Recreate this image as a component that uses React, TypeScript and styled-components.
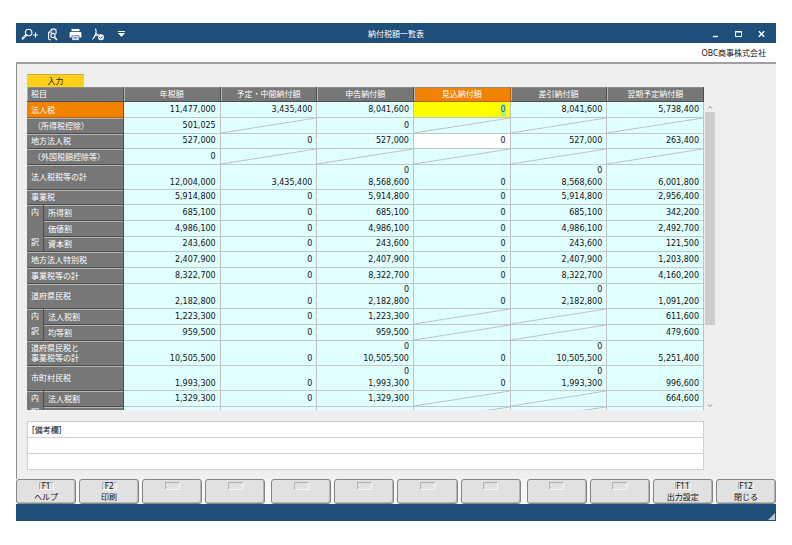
import React, { useEffect, useRef } from 'react';
import styled, { createGlobalStyle, css } from 'styled-components';

const GlobalStyle = createGlobalStyle`
  *, *::before, *::after { box-sizing: border-box; }
  body {
    margin: 0;
    background: #fff;
    color: #111;
    font: 8px/10px "Noto Sans", "Noto Sans CJK JP", sans-serif;
  }
  button, input { font: inherit; color: inherit; margin: 0; padding: 0; border: 0; }
`;

const Page = styled.main`
  height: 100vh;
  min-height: 320px;
  padding: 23px 16px 24px;
`;

const AppWindow = styled.section`
  display: flex;
  flex-direction: column;
  height: 100%;
`;

const TitleBar = styled.header`
  display: grid;
  grid-template-columns: 1fr auto 1fr;
  align-items: center;
  height: 20px;
  padding: 2px 5px 0;
  background: #1f4e79;
  color: #fff;
`;

const Title = styled.h1`
  margin: 0;
  font-size: 8px;
  font-weight: 400;
`;

const Tools = styled.div`
  display: flex;
  align-items: center;
  gap: 6px;
`;

const WindowControls = styled(Tools)`
  justify-content: flex-end;
  gap: 12px;
  padding-right: 4px;
`;

const IconButton = styled.button`
  display: grid;
  place-items: center;
  width: 17px;
  height: 16px;
  background: none;
  color: #fff;
`;

const ControlButton = styled(IconButton)`
  width: 11px;
`;

const CompanyBar = styled.div`
  display: flex;
  align-items: center;
  justify-content: flex-end;
  height: 19px;
  padding-right: 10px;
`;

const Panel = styled.div`
  display: flex;
  flex: 1;
  flex-direction: column;
  min-height: 0;
  padding: 10px 0 9px 10px;
  background: #efefef;
  border-top: 2px solid #a0a0a0;
  border-left: 1px solid #8c8c8c;
`;

const Tab = styled.button`
  width: 57px;
  height: 13px;
  background: #ffd017;
  border-top: 1px solid #c8a84a;
  color: #222;
  text-align: center;
`;

const TableArea = styled.div`
  display: grid;
  grid-template-columns: minmax(0, 1fr) 72px;
  flex: 1;
  min-height: 0;
`;

const Viewport = styled.div`
  min-height: 0;
  overflow: hidden;
`;

const Table = styled.table`
  width: 100%;
  table-layout: fixed;
  border-collapse: separate;
  border-spacing: 0;
`;

const GroupCol = styled.col`
  width: 17px;
`;

const NameCol = styled.col`
  width: 80px;
`;

const bevel = css`
  background: #777;
  color: #fff;
  border-right: 1px solid #4e4e4e;
  border-bottom: 1px solid #4e4e4e;
  box-shadow: inset 0 1px #b4b4b4;
`;

const HeadCell = styled.th<{ $active?: boolean; $start?: boolean }>`
  ${bevel}
  position: sticky;
  top: 0;
  height: 15px;
  padding: 0 4px;
  font-weight: 400;
  text-align: ${(p) => (p.$start ? 'left' : 'center')};
  box-shadow: inset 1px 0 #b4b4b4, inset 0 1px #8c8c8c;
  ${(p) => p.$active && css`background: #f08200; border-color: #b96400;`}
`;

const Row = styled.tr<{ $tall?: boolean }>`
  height: ${(p) => (p.$tall ? 25 : 16)}px;
  ${(p) => !p.$tall && css`&:nth-child(3n) { height: 15px; }`}
`;

const NameCell = styled.th<{ $active?: boolean; $indent?: boolean }>`
  ${bevel}
  padding: 0 4px 0 ${(p) => (p.$indent ? 6 : 4)}px;
  font-weight: 400;
  text-align: left;
  white-space: nowrap;
  ${(p) => p.$active && css`background: #f08200; border-bottom-color: #b96400; box-shadow: none;`}
`;

const GroupCell = styled(NameCell)`
  height: 1px;
  padding: 2px 4px 4px;
`;

const GroupLabel = styled.span`
  display: flex;
  flex-direction: column;
  justify-content: space-between;
  height: 100%;
`;

const ValueCell = styled.td<{ $slash?: boolean; $tall?: boolean; $tone?: 'focus' | 'entry' }>`
  padding: 0 4px 0 2px;
  background: ${(p) => (p.$tone === 'focus' ? '#ffff00' : p.$tone === 'entry' ? '#fff' : '#e0ffff')};
  border-right: 1px solid #c2c2c2;
  border-bottom: 1px solid #c2c8c8;
  font-family: "DejaVu Sans", sans-serif;
  line-height: 12px;
  text-align: right;
  vertical-align: ${(p) => (p.$tall ? 'bottom' : 'middle')};
  ${(p) => p.$slash && css`
    background-image: linear-gradient(to bottom right, transparent calc(50% - 1px), #bcc4c4 50%, transparent calc(50% + 1px));
  `}
`;

const Line = styled.div``;

const AmountInput = styled.input`
  display: block;
  width: 100%;
  height: 12px;
  background: none;
  outline: none;
  text-align: right;
  &::selection { background: #a0f096; color: #0a6478; }
`;

const ScrollBar = styled.div`
  display: flex;
  flex-direction: column;
  width: 11px;
  min-height: 0;
  padding: 15px 0 0 1px;
`;

const ScrollButton = styled.button`
  display: grid;
  place-items: center;
  flex: none;
  height: 10px;
  background: none;
  color: #777;
`;

const Track = styled.div`
  flex: 1;
  min-height: 0;
`;

const Thumb = styled.div`
  height: 74%;
  background: #cdcdcd;
`;

const Notes = styled.div`
  margin: 11px 72px 0 0;
  background: #fff;
  border: 1px solid #cfcfcf;
  border-bottom: 0;
`;

const NoteLine = styled.div`
  display: flex;
  align-items: center;
  gap: 4px;
  height: 16px;
  padding: 0 4px;
  border-bottom: 1px solid #cfcfcf;
`;

const NoteInput = styled.input`
  flex: 1;
  min-width: 0;
  background: none;
  outline: none;
`;

const KeyBar = styled.nav`
  display: grid;
  grid-template-columns: repeat(3, minmax(0, 1fr));
  gap: 6px;
  background: #f6f6f6;
`;

const KeyGroup = styled.div`
  display: grid;
  grid-template-columns: repeat(4, minmax(0, 1fr));
  gap: 3px;
`;

const KeyButton = styled.button`
  display: flex;
  flex-direction: column;
  align-items: center;
  gap: 1px;
  height: 25px;
  padding-top: 2px;
  background: #e1e1e1;
  border: 1px solid #858585;
  border-radius: 3px;
  box-shadow: inset -1px -1px #b4b4b4;
  line-height: 12px;
  white-space: nowrap;
`;

const KeyCap = styled.span`
  min-width: 15px;
  height: 8px;
  border: 1px solid #f6f6f6;
  border-top-color: #b0b0b0;
  border-left-color: #b0b0b0;
  line-height: 6px;
`;

const StatusBar = styled.footer`
  display: flex;
  align-items: flex-end;
  justify-content: flex-end;
  height: 17px;
  padding: 1px;
  background: #1f4e79;
`;

type Value = string | null | [string, string];
type RowData = {
  name: string;
  values: Value[];
  tall?: boolean;
  indent?: boolean;
  group?: number;
  child?: boolean;
  entry?: 'focus' | 'entry';
};

const heads = ['年税額', '予定・中間納付額', '申告納付額', '見込納付額', '差引納付額', '翌期予定納付額'];

const rows: RowData[] = [
  { name: '法人税', entry: 'focus', values: ['11,477,000', '3,435,400', '8,041,600', '0', '8,041,600', '5,738,400'] },
  { name: '（所得税控除）', indent: true, values: ['501,025', null, '0', null, null, null] },
  { name: '地方法人税', entry: 'entry', values: ['527,000', '0', '527,000', '0', '527,000', '263,400'] },
  { name: '（外国税額控除等）', indent: true, values: ['0', null, null, null, null, null] },
  { name: '法人税税等の計', tall: true, values: ['12,004,000', '3,435,400', ['0', '8,568,600'], '0', ['0', '8,568,600'], '6,001,800'] },
  { name: '事業税', values: ['5,914,800', '0', '5,914,800', '0', '5,914,800', '2,956,400'] },
  { name: '所得割', child: true, group: 3, values: ['685,100', '0', '685,100', '0', '685,100', '342,200'] },
  { name: '価値割', child: true, values: ['4,986,100', '0', '4,986,100', '0', '4,986,100', '2,492,700'] },
  { name: '資本割', child: true, values: ['243,600', '0', '243,600', '0', '243,600', '121,500'] },
  { name: '地方法人特別税', values: ['2,407,900', '0', '2,407,900', '0', '2,407,900', '1,203,800'] },
  { name: '事業税等の計', values: ['8,322,700', '0', '8,322,700', '0', '8,322,700', '4,160,200'] },
  { name: '道府県民税', tall: true, values: ['2,182,800', '0', ['0', '2,182,800'], '0', ['0', '2,182,800'], '1,091,200'] },
  { name: '法人税割', child: true, group: 2, values: ['1,223,300', '0', '1,223,300', null, null, '611,600'] },
  { name: '均等割', child: true, values: ['959,500', '0', '959,500', null, null, '479,600'] },
  { name: '道府県民税と\n事業税等の計', tall: true, values: ['10,505,500', '0', ['0', '10,505,500'], '0', ['0', '10,505,500'], '5,251,400'] },
  { name: '市町村民税', tall: true, values: ['1,993,300', '0', ['0', '1,993,300'], '0', ['0', '1,993,300'], '996,600'] },
  { name: '法人税割', child: true, group: 2, values: ['1,329,300', '0', '1,329,300', null, null, '664,600'] },
  { name: '均等割', child: true, values: ['', '', '', null, null, ''] },
];

const keyGroups: [string, string][][] = [
  [['F1', 'ヘルプ'], ['F2', '印刷'], ['', ''], ['', '']],
  [['', ''], ['', ''], ['', ''], ['', '']],
  [['', ''], ['', ''], ['F11', '出力設定'], ['F12', '閉じる']],
];

const ZoomIcon = () => (
  <svg width="17" height="13" viewBox="0 0 17 13" fill="none" stroke="currentColor">
    <circle cx="7.6" cy="4.5" r="3.3" strokeWidth="1.1" />
    <path d="M5.2 6.9 1.7 10.6" strokeWidth="2.2" strokeLinecap="round" />
    <path d="M4.6 7.7 2 10.4" stroke="#1f4e79" strokeWidth="0.6" />
    <path d="M12 7h5M14.5 4.500v5" strokeWidth="1" />
  </svg>
);

const PreviewIcon = () => (
  <svg width="11" height="13" viewBox="0 0 11 13" fill="none" stroke="currentColor" strokeWidth="1.1">
    <path d="M9 6V2.300C9 1.500 8.500 1.100 7.700 1.100H5L1.600 4.600v6c0 .700.400 1.100 1.100 1.100H4" />
    <path d="M1.800 4.700h3V1.500" strokeWidth="0.700" />
    <circle cx="6" cy="7.500" r="2.100" />
    <path d="m7.500 9.200 2.400 2.700" strokeWidth="1.500" />
  </svg>
);

const PrinterIcon = () => (
  <svg width="13" height="13" viewBox="0 0 13 13" fill="currentColor">
    <path d="M2.500 1h8v2.200h-8z" />
    <path d="M1.800 4h9.400c.7 0 1.200.5 1.200 1.200v4.300h-2V7.400H2.600v2.100h-2V5.200C.6 4.500 1.100 4 1.800 4z" />
    <path d="M3.300 8.200h6.400v3.900H3.300z" />
    <path d="M4.400 9.500h4.200M4.400 10.800h4.200" stroke="#1f4e79" strokeWidth="0.6" />
  </svg>
);

const PdfIcon = () => (
  <svg width="13" height="13" viewBox="0 0 13 13" fill="none" stroke="currentColor">
    <path d="M3.600 1c1 1.600.6 3.300 0 5C3 7.800 2 9.800.8 11M3.800 4.500C4.500 6.200 5.600 7 7 7.200M2.300 8.200c1-.7 2-1 3-1" strokeWidth="1.1" strokeLinecap="round" />
    <circle cx="9" cy="9.300" r="3" fill="currentColor" stroke="none" />
    <path d="m7.500 9.300 1.200 1.200 2-2.300" stroke="#1f4e79" strokeWidth="0.9" />
  </svg>
);

const MenuIcon = () => (
  <svg width="9" height="8" viewBox="0 0 9 8" fill="currentColor">
    <path d="M1 1h7v1H1zM1 3h7L4.500 7z" />
  </svg>
);

const MinimizeIcon = () => (
  <svg width="9" height="8" viewBox="0 0 9 8"><path d="M2 6.500h5" stroke="currentColor" strokeWidth="1.400" /></svg>
);

const MaximizeIcon = () => (
  <svg width="9" height="8" viewBox="0 0 9 8" fill="none" stroke="currentColor">
    <path d="M1.500 1.500h6v5h-6z" /><path d="M1 2h7" />
  </svg>
);

const CloseIcon = () => (
  <svg width="9" height="8" viewBox="0 0 9 8"><path d="m1.800 1.300 5.400 5.400m0-5.400L1.800 6.700" stroke="currentColor" strokeWidth="1.500" /></svg>
);

const Chevron = ({ up }: { up?: boolean }) => (
  <svg width="6" height="5" viewBox="0 0 6 5" fill="none" stroke="currentColor">
    <path d={up ? 'M1 3.500 3 1.500l2 2' : 'M1 1.500l2 2 2-2'} strokeWidth="0.900" />
  </svg>
);

const Grip = () => (
  <svg width="7" height="7" viewBox="0 0 7 7"><path d="M7 0v7H0z" fill="#b4c4d4" /></svg>
);

function Amount({ row, value, index }: { row: RowData; value: Value; index: number }) {
  const input = useRef<HTMLInputElement>(null);
  const tone = index === 3 ? row.entry : undefined;

  useEffect(() => {
    if (tone === 'focus') {
      input.current?.focus({ preventScroll: true });
      input.current?.select();
    }
  }, [tone]);

  if (value === null) return <ValueCell $slash />;
  if (tone) {
    return (
      <ValueCell $tone={tone}>
        <AmountInput ref={input} aria-label={`${row.name} ${heads[index]}`} defaultValue={value as string} />
      </ValueCell>
    );
  }
  return (
    <ValueCell $tall={row.tall}>
      {Array.isArray(value) ? value.map((v, i) => <Line key={i}>{v}</Line>) : value}
    </ValueCell>
  );
}

export default function App() {
  return (
    <Page>
      <GlobalStyle />
      <AppWindow>
        <TitleBar>
          <Tools>
            <IconButton aria-label="拡大"><ZoomIcon /></IconButton>
            <IconButton aria-label="プレビュー"><PreviewIcon /></IconButton>
            <IconButton aria-label="印刷"><PrinterIcon /></IconButton>
            <IconButton aria-label="PDF"><PdfIcon /></IconButton>
            <IconButton aria-label="メニュー"><MenuIcon /></IconButton>
          </Tools>
          <Title>納付税額一覧表</Title>
          <WindowControls>
            <ControlButton aria-label="最小化"><MinimizeIcon /></ControlButton>
            <ControlButton aria-label="最大化"><MaximizeIcon /></ControlButton>
            <ControlButton aria-label="閉じる"><CloseIcon /></ControlButton>
          </WindowControls>
        </TitleBar>
        <CompanyBar>OBC商事株式会社</CompanyBar>
        <Panel>
          <Tab>入力</Tab>
          <TableArea>
            <Viewport>
              <Table>
                <colgroup>
                  <GroupCol />
                  <NameCol />
                  {heads.map((h) => <col key={h} />)}
                </colgroup>
                <thead>
                  <tr>
                    <HeadCell $start colSpan={2} scope="col">税目</HeadCell>
                    {heads.map((h, i) => <HeadCell key={h} scope="col" $active={i === 3}>{h}</HeadCell>)}
                  </tr>
                </thead>
                <tbody>
                  {rows.map((row, r) => (
                    <Row key={r} $tall={row.tall}>
                      {row.group && (
                        <GroupCell rowSpan={row.group} scope="rowgroup">
                          <GroupLabel><span>内</span><span>訳</span></GroupLabel>
                        </GroupCell>
                      )}
                      <NameCell colSpan={row.child ? 1 : 2} scope="row" $active={row.entry === 'focus'} $indent={row.indent}>
                        {row.name.split('\n').map((part) => <Line key={part}>{part}</Line>)}
                      </NameCell>
                      {row.values.map((v, i) => <Amount key={i} row={row} value={v} index={i} />)}
                    </Row>
                  ))}
                </tbody>
              </Table>
            </Viewport>
            <ScrollBar>
              <ScrollButton aria-label="上へ"><Chevron up /></ScrollButton>
              <Track><Thumb /></Track>
              <ScrollButton aria-label="下へ"><Chevron /></ScrollButton>
            </ScrollBar>
          </TableArea>
          <Notes>
            <NoteLine>
              <label htmlFor="note1">[備考欄]</label>
              <NoteInput id="note1" />
            </NoteLine>
            <NoteLine><NoteInput aria-label="備考欄 2" /></NoteLine>
            <NoteLine><NoteInput aria-label="備考欄 3" /></NoteLine>
          </Notes>
        </Panel>
        <KeyBar>
          {keyGroups.map((group, g) => (
            <KeyGroup key={g}>
              {group.map(([key, label], i) => (
                <KeyButton key={i}>
                  <KeyCap>{key}</KeyCap>
                  {label}
                </KeyButton>
              ))}
            </KeyGroup>
          ))}
        </KeyBar>
        <StatusBar><Grip /></StatusBar>
      </AppWindow>
    </Page>
  );
}
